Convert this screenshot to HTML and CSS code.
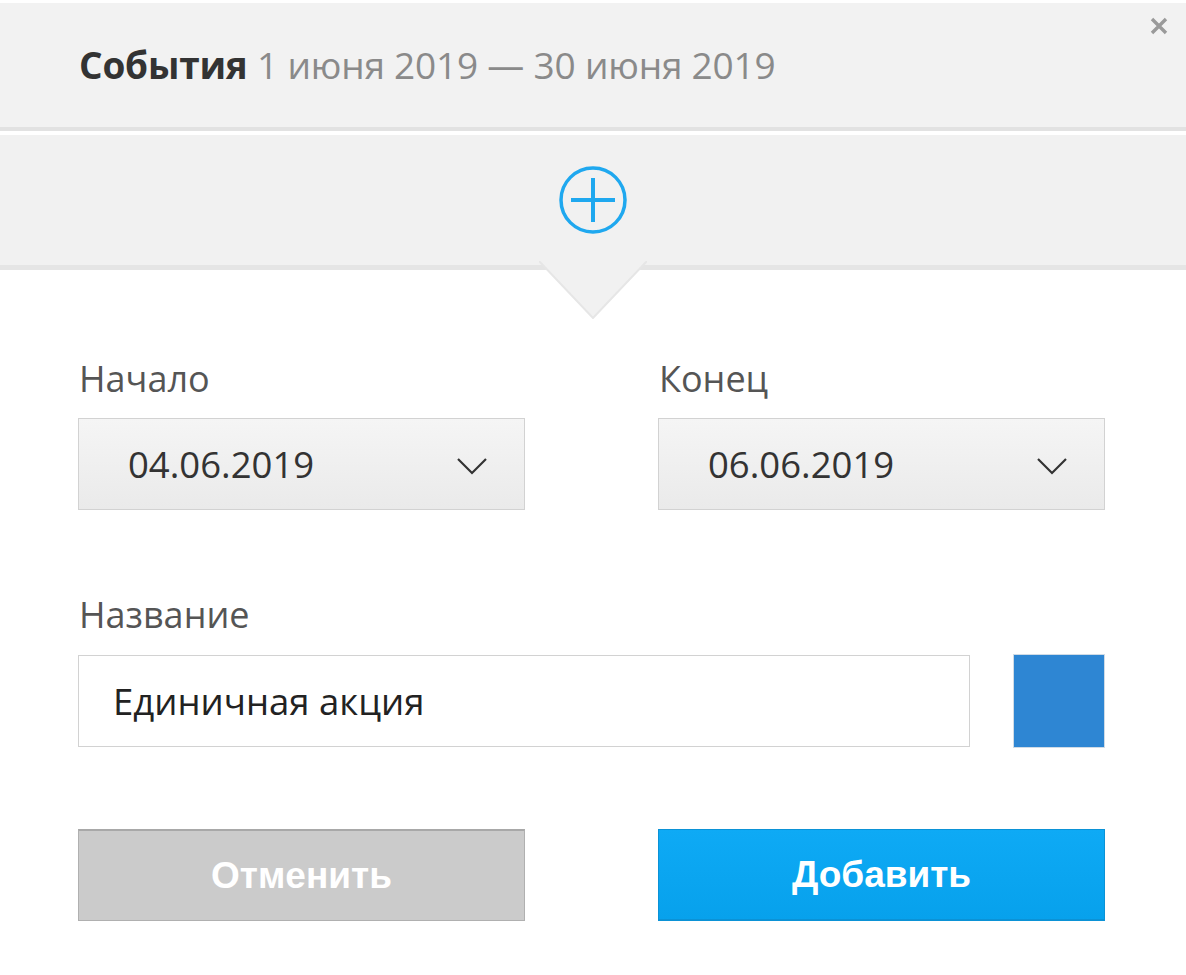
FILE: index.html
```html
<!DOCTYPE html>
<html lang="ru">
<head>
<meta charset="utf-8">
<title>События</title>
<link rel="stylesheet" href="styles.css">
</head>
<body>
<div class="dialog">
  <header class="head">
    <h1 class="title"><b>События</b> <span class="range">1 июня 2019 — 30 июня 2019</span></h1>
    <button class="close" type="button" aria-label="Закрыть">
      <svg width="20" height="20" viewBox="0 0 20 20"><path d="M3 3 L17 17 M17 3 L3 17" stroke="#9a9a9a" stroke-width="3.4" stroke-linecap="butt"/></svg>
    </button>
  </header>
  <div class="addbar">
    <svg class="plus" width="72" height="72" viewBox="0 0 72 72">
      <circle cx="36" cy="36" r="32" fill="none" stroke="#1fa8ef" stroke-width="3.5"/>
      <path d="M14 36 H58 M36 14 V58" stroke="#1fa8ef" stroke-width="4"/>
    </svg>
    <svg class="pointer" width="108" height="58" viewBox="0 0 108 58">
      <polygon points="0,0 108,0 54,57" fill="#f1f1f1"/>
      <polyline points="0,0 54,57 108,0" fill="none" stroke="#e6e6e6" stroke-width="2"/>
    </svg>
  </div>
  <form class="form">
    <div class="row two">
      <div class="field">
        <label class="label">Начало</label>
        <div class="select"><span class="value">04.06.2019</span>
          <svg class="chev" width="32" height="18" viewBox="0 0 32 18"><path d="M2 2 L16 16 L30 2" fill="none" stroke="#333" stroke-width="2.2"/></svg>
        </div>
      </div>
      <div class="field">
        <label class="label">Конец</label>
        <div class="select"><span class="value">06.06.2019</span>
          <svg class="chev" width="32" height="18" viewBox="0 0 32 18"><path d="M2 2 L16 16 L30 2" fill="none" stroke="#333" stroke-width="2.2"/></svg>
        </div>
      </div>
    </div>
    <div class="row name-row">
      <label class="label">Название</label>
      <div class="name-line">
        <div class="input">Единичная акция</div>
        <div class="swatch"></div>
      </div>
    </div>
    <div class="row two buttons">
      <button class="btn cancel" type="button">Отменить</button>
      <button class="btn add" type="button">Добавить</button>
    </div>
  </form>
</div>
</body>
</html>
```

FILE: styles.css
```css
html, body {
  margin: 0;
  padding: 0;
  background: #ffffff;
}

body {
  font-family: "Open Sans", "Noto Sans", sans-serif;
  color: #333;
}

.dialog {
  width: 1186px;
  padding-top: 3px;
}

.head {
  position: relative;
  background: #f2f2f2;
  border-bottom: 4px solid #e2e2e2;
  display: flex;
  align-items: center;
  padding-left: 79px;
  box-sizing: border-box;
  height: 128px;
}

.title {
  margin: 0 0 0 0;
  font-size: 37px;
  font-weight: 400;
  line-height: 44px;
  color: #8a8a8a;
  letter-spacing: -0.2px;
}

.title b {
  font-weight: 700;
  color: #333;
}

.close {
  position: absolute;
  top: 12px;
  right: 16px;
  width: 22px;
  height: 22px;
  padding: 0;
  border: 0;
  background: transparent;
  display: flex;
  align-items: center;
  justify-content: center;
}

.addbar {
  position: relative;
  margin-top: 4px;
  height: 135px;
  box-sizing: border-box;
  background: #f1f1f1;
  border-bottom: 5px solid #e5e5e5;
  display: flex;
  align-items: center;
  justify-content: center;
}

.plus {
  display: block;
}

.pointer {
  position: absolute;
  top: 100%;
  left: 539px;
  margin-top: -4px;
  display: block;
}

.form {
  padding: 87px 81px 0 78px;
  display: flex;
  flex-direction: column;
}

.row.two {
  display: grid;
  grid-template-columns: 447px 447px;
  column-gap: 133px;
}

.field {
  display: flex;
  flex-direction: column;
}

.label {
  display: block;
  font-size: 36px;
  line-height: 44px;
  color: #555;
  margin-left: 1px;
  margin-bottom: 17px;
}

.select {
  height: 92px;
  box-sizing: border-box;
  border: 1px solid #d2d2d2;
  background: linear-gradient(#f5f5f5, #eaeaea);
  display: flex;
  align-items: center;
  justify-content: space-between;
  padding: 0 36px 0 49px;
}

.value {
  font-size: 36.5px;
  color: #333;
  line-height: 44px;
}

.chev {
  display: block;
  margin-top: 4px;
}

.name-row {
  margin-top: 83px;
}

.name-row .label {
  margin-bottom: 17px;
}

.name-line {
  display: flex;
  align-items: center;
  gap: 43px;
}

.input {
  width: 892px;
  height: 92px;
  box-sizing: border-box;
  border: 1px solid #d2d2d2;
  background: #fff;
  display: flex;
  align-items: center;
  padding-left: 34px;
  font-size: 36.5px;
  color: #222;
}

.swatch {
  width: 92px;
  height: 94px;
  box-sizing: border-box;
  background: #2e86d3;
  border: 1px solid #cfdbe6;
}

.buttons {
  margin-top: 81px;
}

.btn {
  height: 92px;
  box-sizing: border-box;
  font-family: "Liberation Sans", Arial, sans-serif;
  font-weight: 700;
  font-size: 37px;
  color: #fff;
  cursor: pointer;
  padding: 0;
}

.cancel {
  background: #cbcbcb;
  border: 1px solid #b0b0b0;
  border-top-color: #a8a8a8;
  border-top-width: 2px;
}

.add {
  background: linear-gradient(#0eaaf5, #07a1ec);
  border: 1px solid #0b92d6;
  border-bottom-width: 2px;
}
```
